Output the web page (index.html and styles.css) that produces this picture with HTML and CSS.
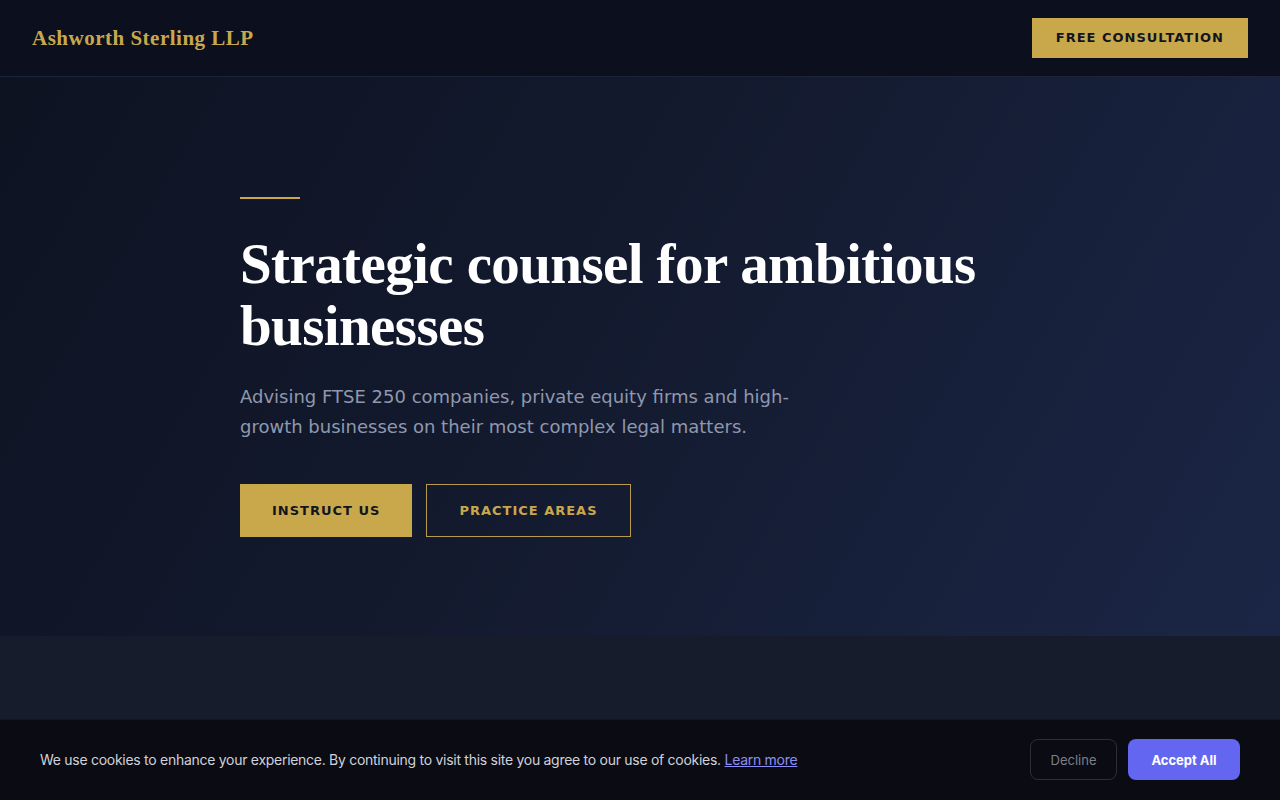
FILE: index.html
```html
<!DOCTYPE html>
<html lang="en">
<head>
  <meta charset="UTF-8" />
  <meta name="viewport" content="width=device-width, initial-scale=1.0"/>
  <title>Ashworth Sterling LLP</title>
  <link rel="stylesheet" href="styles.css">
</head>
<body>

  <header class="site-header">
    <a class="logo" href="#">Ashworth Sterling LLP</a>
    <a class="btn btn-gold btn-small" href="#">Free Consultation</a>
  </header>

  <section class="hero">
    <div class="hero-inner">
      <span class="hero-rule"></span>
      <h1>Strategic counsel for ambitious businesses</h1>
      <p class="hero-text">Advising FTSE 250 companies, private equity firms and high-growth businesses on their most complex legal matters.</p>
      <div class="hero-actions">
        <a class="btn btn-gold" href="#">Instruct Us</a>
        <a class="btn btn-outline" href="#">Practice Areas</a>
      </div>
    </div>
  </section>

  <section class="next-section"></section>

  <div class="cookie-bar">
    <p>We use cookies to enhance your experience. By continuing to visit this site you agree to our use of cookies. <a href="#">Learn more</a></p>
    <div class="cookie-actions">
      <button class="cookie-decline" type="button">Decline</button>
      <button class="cookie-accept" type="button">Accept All</button>
    </div>
  </div>

</body>
</html>
```

FILE: styles.css
```css
* {
  margin: 0;
  padding: 0;
  box-sizing: border-box;
}

body {
  font-family: 'DejaVu Sans', sans-serif;
  background: #161c2c;
  color: #fff;
  height: 800px;
  overflow: hidden;
}

a {
  text-decoration: none;
}

.site-header {
  height: 77px;
  display: flex;
  align-items: center;
  justify-content: space-between;
  padding: 0 32px;
  background: #0c101e;
  border-bottom: 1px solid #1c2438;
}

.logo {
  font-family: 'Liberation Serif', serif;
  font-weight: bold;
  font-size: 21px;
  letter-spacing: 0.5px;
  color: #c9a84c;
}

.btn {
  display: inline-block;
  font-family: 'DejaVu Sans', sans-serif;
  font-weight: bold;
  font-size: 13px;
  line-height: 17px;
  letter-spacing: 1px;
  text-transform: uppercase;
  padding: 18px 32px;
}

.btn-gold {
  background: #c9a84c;
  color: #12151f;
}

.btn-small {
  padding: 11px 24px 12px;
}

.btn-outline {
  border: 1px solid #b89b4e;
  color: #c9a84c;
  padding: 17px 32px;
}

.hero {
  height: 559px;
  background: linear-gradient(120deg, #0e1322 0%, #131a2e 45%, #1b2646 100%);
  padding: 120px 240px 0;
}

.hero-rule {
  display: block;
  width: 60px;
  height: 2px;
  background: #c9a84c;
  margin-bottom: 34px;
}

.hero h1 {
  font-family: 'Liberation Serif', serif;
  font-weight: bold;
  font-size: 57px;
  line-height: 62px;
  letter-spacing: -0.6px;
  max-width: 780px;
  margin-bottom: 25px;
}

.hero-text {
  font-size: 18px;
  line-height: 30px;
  color: #8f98ae;
  max-width: 560px;
  margin-bottom: 42px;
}

.hero-actions {
  display: flex;
  gap: 14px;
}

.next-section {
  height: 83px;
  background: #161c2c;
}

.cookie-bar {
  position: fixed;
  left: 0;
  right: 0;
  bottom: 0;
  height: 81px;
  display: flex;
  align-items: center;
  justify-content: space-between;
  padding: 0 40px;
  background: #0b0b14;
  border-top: 1px solid #15151f;
  font-family: 'Inter', sans-serif;
}

.cookie-bar p {
  font-size: 14px;
  letter-spacing: -0.28px;
  color: #d0d2da;
  margin-top: -2px;
}

.cookie-bar p a {
  color: #8b8ff5;
  text-decoration: underline;
}

.cookie-actions {
  display: flex;
  gap: 11px;
  margin-top: -1px;
}

.cookie-actions button {
  font-family: 'Inter', sans-serif;
  font-size: 13px;
  height: 41px;
  border-radius: 8px;
  cursor: pointer;
}

.cookie-decline {
  width: 87px;
  background: transparent;
  border: 1px solid #2e2e38;
  color: #7d7f88;
}

.cookie-accept {
  width: 112px;
  background: #6366f1;
  border: none;
  color: #fff;
  font-weight: 700;
}
```
